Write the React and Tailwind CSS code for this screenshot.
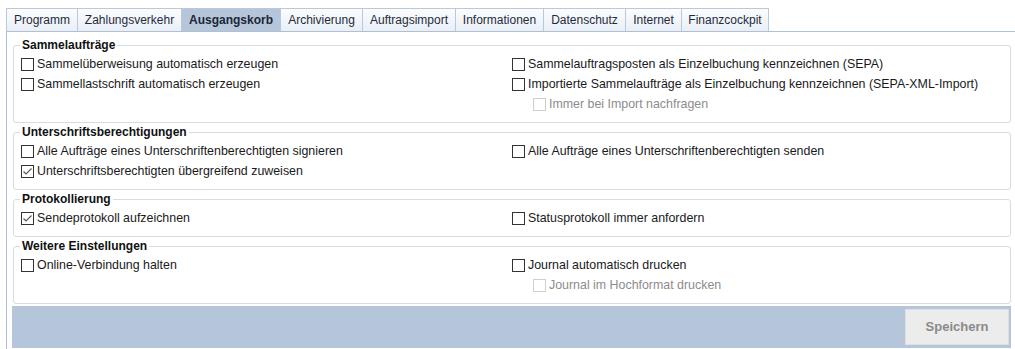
import React from "react";

const tabs = [
  ["Programm", "w-[71px]"],
  ["Zahlungsverkehr", "w-[104px]"],
  ["Ausgangskorb", "w-[99px]"],
  ["Archivierung", "w-[82px]"],
  ["Auftragsimport", "w-[93px]"],
  ["Informationen", "w-[88px]"],
  ["Datenschutz", "w-[82px]"],
  ["Internet", "w-[56px]"],
  ["Finanzcockpit", "w-[88px]"],
];

function Box({ checked, disabled }) {
  return (
    <span
      className={
        "w-[13px] h-[13px] shrink-0 border bg-white flex items-center justify-center " +
        (disabled ? "border-[#cfcfcf]" : "border-[#333333]")
      }
    >
      {checked && (
        <svg width="11" height="11" viewBox="0 0 11 11">
          <polyline points="1.5,5.5 4,8 9.5,2.5" fill="none" stroke="#555" strokeWidth="1.1" />
        </svg>
      )}
    </span>
  );
}

function Check({ label, checked, disabled, indent }) {
  return (
    <div className={"h-[20px] flex items-center gap-[3px] " + (indent ? "pl-[21px]" : "")}>
      <Box checked={checked} disabled={disabled} />
      <span className={disabled ? "text-[#8c8c8c]" : "text-[#1a1a1a]"}>{label}</span>
    </div>
  );
}

function Group({ title, left, right }) {
  return (
    <fieldset className="border border-[#d6dce3] rounded-[3px] px-[7px] pt-[2px] pb-[8px] min-w-0">
      <legend className="font-bold text-[12px] leading-[14px] text-[#111] px-[2px] -ml-[1px]">{title}</legend>
      <div className="grid grid-cols-[491px_1fr]">
        <div className="flex flex-col">{left}</div>
        <div className="flex flex-col">{right}</div>
      </div>
    </fieldset>
  );
}

export default function App() {
  return (
    <div className="w-[1015px] h-[349px] bg-white pl-[6px] pt-[8px] font-['Liberation_Sans',Arial,sans-serif] text-[12.4px] overflow-hidden">
      <div className="flex h-[23px]">
        {tabs.map(([t, w], i) => {
          const active = t === "Ausgangskorb";
          return (
            <div
              key={t}
              className={
                w +
                " h-[23px] border-t border-l border-[#b9c8da] flex items-center justify-center text-[12px] " +
                (i === tabs.length - 1 ? "border-r " : "") +
                (active
                  ? "bg-[#b6c6da] font-bold text-[#1b2638]"
                  : "bg-gradient-to-b from-[#fbfcfe] to-[#e9eff6] text-[#1f2b3b]")
              }
            >
              {t}
            </div>
          );
        })}
      </div>
      <div className="border-t border-l border-[#b0c0d4] pl-[6px] pr-[4px] pt-[6px] h-[318px] flex flex-col gap-[2px]">
        <Group
          title="Sammelaufträge"
          left={[
            <Check key="a" label="Sammelüberweisung automatisch erzeugen" />,
            <Check key="b" label="Sammellastschrift automatisch erzeugen" />,
          ]}
          right={[
            <Check key="c" label="Sammelauftragsposten als Einzelbuchung kennzeichnen (SEPA)" />,
            <Check key="d" label="Importierte Sammelaufträge als Einzelbuchung kennzeichnen (SEPA-XML-Import)" />,
            <Check key="e" label="Immer bei Import nachfragen" disabled indent />,
          ]}
        />
        <Group
          title="Unterschriftsberechtigungen"
          left={[
            <Check key="a" label="Alle Aufträge eines Unterschriftenberechtigten signieren" />,
            <Check key="b" label="Unterschriftsberechtigten übergreifend zuweisen" checked />,
          ]}
          right={[<Check key="c" label="Alle Aufträge eines Unterschriftenberechtigten senden" />]}
        />
        <Group
          title="Protokollierung"
          left={[<Check key="a" label="Sendeprotokoll aufzeichnen" checked />]}
          right={[<Check key="b" label="Statusprotokoll immer anfordern" />]}
        />
        <Group
          title="Weitere Einstellungen"
          left={[<Check key="a" label="Online-Verbindung halten" />]}
          right={[
            <Check key="b" label="Journal automatisch drucken" />,
            <Check key="c" label="Journal im Hochformat drucken" disabled indent />,
          ]}
        />
        <div className="-ml-px h-[42px] bg-[#b5c6da] flex justify-end items-start pt-[3px] pr-[2px]">
          <button className="w-[104px] h-[36px] bg-[#ececec] border border-[#e0e0e0] text-[13px] font-bold text-[#8a8a8a]">
            Speichern
          </button>
        </div>
      </div>
    </div>
  );
}
